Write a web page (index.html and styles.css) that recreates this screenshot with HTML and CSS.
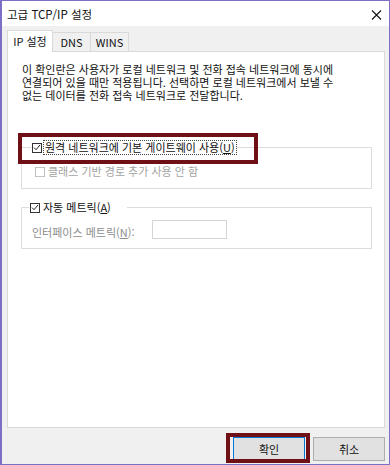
FILE: index.html
```html
<!DOCTYPE html>
<html lang="ko">
<head>
<meta charset="utf-8">
<title>고급 TCP/IP 설정</title>
<link rel="stylesheet" href="styles.css">
</head>
<body>
<div class="window">
  <div class="titlebar">
    <span class="title">고급 TCP/IP 설정</span>
    <svg class="close" width="11" height="10" viewBox="0 0 11 10"><path d="M1 0.5L10 9.5M10 0.5L1 9.5" stroke="#111" stroke-width="1.1" fill="none"/></svg>
  </div>
  <div class="client">
    <div class="tabs">
      <div class="tab active">IP 설정</div>
      <div class="tab">DNS</div>
      <div class="tab">WINS</div>
    </div>
    <div class="panel">
      <p class="desc">이 확인란은 사용자가 로컬 네트워크 및 전화 접속 네트워크에 동시에<br>연결되어 있을 때만 적용됩니다. 선택하면 로컬 네트워크에서 보낼 수<br>없는 데이터를 전화 접속 네트워크로 전달합니다.</p>
      <fieldset class="group g1">
        <legend class="legend"><span class="chk on"><svg width="9" height="9" viewBox="0 0 9 9"><path d="M1.2 4.6L3.4 7L7.9 1.6" stroke="#222" stroke-width="1.1" fill="none"/></svg></span><span class="focus">원격 네트워크에 기본 게이트웨이 사용(<u>U</u>)</span></legend>
        <div class="row disabled"><span class="chk off"></span><span>클래스 기반 경로 추가 사용 안 함</span></div>
      </fieldset>
      <fieldset class="group g2">
        <legend class="legend"><span class="chk on"><svg width="9" height="9" viewBox="0 0 9 9"><path d="M1.2 4.6L3.4 7L7.9 1.6" stroke="#222" stroke-width="1.1" fill="none"/></svg></span><span class="lbl">자동 메트릭(<u>A</u>)</span></legend>
        <div class="row metric"><span class="mlabel">인터페이스 메트릭(<u>N</u>):</span><span class="input"></span></div>
      </fieldset>
      <div class="mark mark-gw"></div>
    </div>
    <div class="buttons">
      <div class="btn-wrap">
        <button class="btn default">확인</button>
        <div class="mark mark-ok"></div>
      </div>
      <button class="btn">취소</button>
    </div>
  </div>
</div>
</body>
</html>
```

FILE: styles.css
```css
html, body {
  margin: 0;
  padding: 0;
}
body {
  width: 390px;
  height: 465px;
  overflow: hidden;
  font-family: "Noto Sans CJK KR", "Noto Sans", sans-serif;
  font-size: 11px;
  color: #111;
  background: #ffffff;
}
.window {
  box-sizing: border-box;
  width: 390px;
  height: 465px;
  border: 1px solid #7b6fc6;
  border-left-width: 2px;
  display: flex;
  flex-direction: column;
  background: #f0f0f0;
}
.titlebar {
  height: 25px;
  background: #ffffff;
  display: flex;
  align-items: center;
  justify-content: space-between;
  padding: 0 6px 0 5px;
  flex: none;
}
.title {
  font-size: 11.5px;
  color: #111;
  line-height: 14px;
}
.close {
  margin-top: 2px;
  margin-right: 1px;
}
.client {
  flex: 1;
  padding: 4px 4px 0 5px;
  display: flex;
  flex-direction: column;
}
.tabs {
  display: flex;
  align-items: flex-end;
  height: 22px;
  margin-bottom: -1px;
  position: relative;
  z-index: 1;
}
.tab {
  box-sizing: border-box;
  height: 19px;
  margin-bottom: 1px;
  border: 1px solid #d9d9d9;
  border-bottom: none;
  border-left: none;
  background: #f0f0f0;
  display: flex;
  align-items: center;
  justify-content: center;
  line-height: 13px;
  padding-top: 1px;
}
.tab:nth-child(2) { width: 38px; }
.tab:nth-child(3) { width: 38px; }
.tab.active {
  width: 46px;
  height: 22px;
  margin-bottom: 0;
  border-left: 1px solid #d9d9d9;
  background: #ffffff;
  padding-top: 0;
}
.panel {
  box-sizing: border-box;
  height: 377px;
  border: 1px solid #d9d9d9;
  background: #ffffff;
  position: relative;
  flex: none;
}
.desc {
  margin: 0;
  padding: 11px 10px 0 14px;
  line-height: 13px;
  white-space: nowrap;
}
.group {
  margin: 0 12px 0 13px;
  border: 1px solid #dcdcdc;
  min-inline-size: 0;
}
.g1 {
  margin-top: 39px;
  padding: 0 0 10px 9px;
}
.g2 {
  margin-top: 12px;
  padding: 0 0 9px 7px;
}
.legend {
  padding: 0 1px;
  display: flex;
  align-items: center;
  height: 13px;
  line-height: 13px;
}
.g2 .legend {
  padding-right: 16px;
}
.chk {
  box-sizing: border-box;
  width: 10px;
  height: 10px;
  border: 1px solid #333;
  background: #fff;
  display: inline-flex;
  align-items: center;
  justify-content: center;
  flex: none;
}
.chk.off {
  border-color: #c2c2c2;
}
.chk svg {
  display: block;
}
.focus {
  margin-left: 2px;
  outline: 1px dotted #444;
  outline-offset: 0;
  padding: 0 1px;
}
.lbl {
  margin-left: 3px;
}
.row {
  display: flex;
  align-items: center;
  line-height: 13px;
}
.row.disabled {
  margin-top: 11px;
  margin-left: 4px;
  color: #a3a3a3;
}
.row.disabled .chk {
  margin-right: 3px;
}
.metric {
  margin-top: 5px;
  margin-left: 3px;
  color: #8d8d8d;
}
.mlabel {
  width: 120px;
  padding-top: 7px;
}
.input {
  box-sizing: border-box;
  width: 75px;
  height: 19px;
  border: 1px solid #d4d4d4;
  background: #fff;
}
u {
  text-decoration: underline;
  text-underline-offset: 1px;
}
.mark {
  position: absolute;
  box-sizing: border-box;
  border: 4px solid #6e1016;
  pointer-events: none;
}
.mark-gw {
  left: 10px;
  top: 81px;
  width: 240px;
  height: 31px;
}
.buttons {
  display: flex;
  justify-content: flex-end;
  gap: 8px;
  margin-top: 9px;
}
.btn-wrap {
  position: relative;
}
.btn {
  box-sizing: border-box;
  width: 72px;
  height: 24px;
  margin: 0;
  padding: 0;
  border: 1px solid #adadad;
  background: #e1e1e1;
  font-family: "Noto Sans CJK KR", "Noto Sans", sans-serif;
  font-size: 11px;
  color: #111;
  display: block;
}
.btn.default {
  border-color: #0078d7;
}
.mark-ok {
  left: -7px;
  top: -4px;
  width: 84px;
  height: 30px;
}
```
